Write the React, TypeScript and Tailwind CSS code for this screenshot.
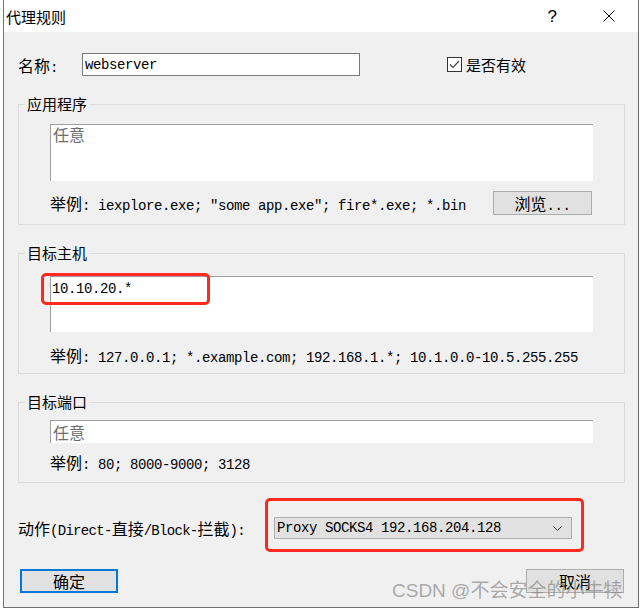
import React from 'react';

const mono = "font-['Liberation_Mono','Noto_Sans_CJK_SC',monospace] text-[14px] tracking-[-0.4px] leading-[20px] text-black";
const cjk = "font-['Noto_Sans_CJK_SC',sans-serif] text-[16px] tracking-normal";

function Cn({ children, className = '' }: { children: React.ReactNode; className?: string }) {
  return <span className={`${cjk} ${className}`}>{children}</span>;
}

function Group({ title, pt, pb, children }: { title: string; pt: string; pb: string; children: React.ReactNode }) {
  return (
    <fieldset className="border border-[#dcdcdc] mt-[18px]">
      <legend className="ml-[6px] px-[2px] h-[20px] font-['Noto_Sans_CJK_SC',sans-serif] text-[15px] leading-[20px] text-black">
        {title}
      </legend>
      <div className={`px-[31px] ${pt} ${pb}`}>{children}</div>
    </fieldset>
  );
}

function WinButton({ children, primary = false, className = '' }: { children: React.ReactNode; primary?: boolean; className?: string }) {
  return (
    <button
      className={`h-[24px] w-[98px] bg-[#e1e1e1] flex items-center justify-center ${
        primary ? 'border-2 border-[#0078d7]' : 'border border-[#adadad]'
      } ${className}`}
    >
      {children}
    </button>
  );
}

export default function App() {
  return (
    <div className="w-[640px] h-[610px] bg-white overflow-hidden relative">
      <div className="ml-[3px] w-[636px] h-[608px] border-l border-r border-b border-[#707070] flex flex-col">
        {/* Title bar */}
        <div className="h-[32px] bg-white flex items-center pl-[2px] pr-[23px] shrink-0">
          <span className="font-['Noto_Sans_CJK_SC',sans-serif] text-[15px] text-black leading-none">代理规则</span>
          <span className="ml-auto font-['Liberation_Sans',sans-serif] text-[17px] text-black leading-none font-light">?</span>
          <svg className="ml-[46px]" width="12" height="12" viewBox="0 0 12 12">
            <path d="M0.5 0.5 L11.5 11.5 M11.5 0.5 L0.5 11.5" stroke="#000" strokeWidth="1" />
          </svg>
        </div>

        {/* Body */}
        <div className="flex-1 bg-[#f0f0f0] pl-[14px] pr-[13px] relative">
          {/* Name row */}
          <div className="mt-[21px] flex items-center h-[23px]">
            <div className={`w-[64px] h-[20px] ${mono}`}>
              <Cn>名称</Cn>:
            </div>
            <div className={`w-[278px] h-[23px] bg-white border border-[#7a7a7a] pl-[2px] flex items-center ${mono}`}>
              webserver
            </div>
            <div className="ml-[87px] flex items-center">
              <div className="w-[15px] h-[15px] border border-[#333] bg-white flex items-center justify-center">
                <svg width="11" height="9" viewBox="0 0 11 9">
                  <path d="M1 4.5 L4 7.5 L10 1" stroke="#444" strokeWidth="1.2" fill="none" />
                </svg>
              </div>
              <span className="ml-[4px] font-['Noto_Sans_CJK_SC',sans-serif] text-[15px] text-black leading-[20px]">是否有效</span>
            </div>
          </div>

          {/* Application */}
          <Group title="应用程序" pt="pt-[10px]" pb="pb-[9px]">
            <div className="h-[57px] bg-white border-t border-l border-[#a0a0a0] pl-[2px]">
              <div className="h-[20px] -mt-[2px]">
                <Cn className="text-[#6d6d6d] leading-[20px]">任意</Cn>
              </div>
            </div>
            <div className="mt-[10px] h-[24px] flex items-center justify-between">
              <div className={`h-[20px] ${mono}`}>
                <Cn>举例</Cn>: iexplore.exe; ″some app.exe″; fire*.exe; *.bin
              </div>
              <WinButton className="w-[99px] mr-[1px]">
                <span className={`h-[20px] ${mono}`}>
                  <Cn>浏览</Cn>...
                </span>
              </WinButton>
            </div>
          </Group>

          {/* Target host */}
          <Group title="目标主机" pt="pt-[13px]" pb="pb-[8px]">
            <div className="h-[56px] bg-white border-t border-l border-[#a0a0a0] pl-[1px] pt-[2px] relative">
              <div className={`h-[20px] ${mono}`}>10.10.20.*</div>
              <div className="absolute left-[-10px] top-[-4px] w-[169px] h-[32px] border-[3px] border-[#ff2a1f] rounded-[5px]" />
            </div>
            <div className={`mt-[13px] h-[20px] ${mono}`}>
              <Cn>举例</Cn>: 127.0.0.1; *.example.com; 192.168.1.*; 10.1.0.0-10.5.255.255
            </div>
          </Group>

          {/* Target port */}
          <Group title="目标端口" pt="pt-[8px]" pb="pb-[10px]">
            <div className="h-[23px] bg-white border-t border-l border-[#a0a0a0] pl-[2px] flex items-center">
              <Cn className="text-[#6d6d6d] leading-[20px]">任意</Cn>
            </div>
            <div className={`mt-[9px] h-[20px] ${mono}`}>
              <Cn>举例</Cn>: 80; 8000-9000; 3128
            </div>
          </Group>

          {/* Action */}
          <div className="mt-[34px] h-[22px] flex items-center">
            <div className={`w-[256px] h-[20px] ${mono} tracking-[-0.7px]`}>
              <Cn>动作</Cn>(Direct-<Cn>直接</Cn>/Block-<Cn>拦截</Cn>):
            </div>
            <div className="relative">
              <div className="w-[298px] h-[22px] bg-[#e1e1e1] border border-[#adadad] flex items-center pl-[2px] pr-[9px]">
                <span className={mono}>Proxy SOCKS4 192.168.204.128</span>
                <svg className="ml-auto" width="9" height="5" viewBox="0 0 9 5">
                  <path d="M0.5 0.5 L4.5 4.5 L8.5 0.5" stroke="#333" strokeWidth="1" fill="none" />
                </svg>
              </div>
              <div className="absolute left-[-9px] top-[-19px] w-[319px] h-[54px] border-[3px] border-[#ff2a1f] rounded-[5px]" />
            </div>
          </div>

          {/* Buttons */}
          <div className="mt-[30px] flex justify-between pl-[2px] pr-[1px]">
            <WinButton primary>
              <Cn className="text-black leading-[20px]">确定</Cn>
            </WinButton>
            <WinButton>
              <Cn className="text-black leading-[20px]">取消</Cn>
            </WinButton>
          </div>

          {/* watermark */}
          <div className="absolute left-[388px] top-[544px] font-['Noto_Sans_CJK_SC',sans-serif] text-[19px] leading-[26px] text-[#8a8a8a]/70 whitespace-nowrap">
            <span className="font-['Liberation_Sans',sans-serif] text-[19px]">CSDN @</span>不会安全的小牛犊
          </div>
        </div>
      </div>
    </div>
  );
}
